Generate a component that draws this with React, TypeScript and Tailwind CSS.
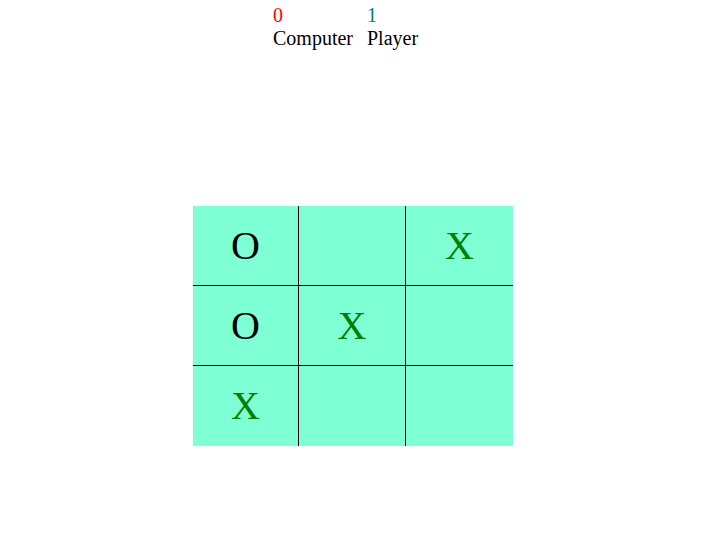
const board = ['O', '', 'X', 'O', 'X', '', 'X', '', ''];

export default function App() {
  return (
    <div className="min-h-screen bg-white" style={{ fontFamily: '"Liberation Serif", "Times New Roman", serif' }}>
      {/* Scoreboard */}
      <div className="flex pl-[273px] pt-1 text-[20px] leading-[23px] text-black">
        <div className="flex flex-col w-[94px]">
          <span className="text-[#ff0000]">0</span>
          <span>Computer</span>
        </div>
        <div className="flex flex-col">
          <span className="text-[#008080]">1</span>
          <span>Player</span>
        </div>
      </div>

      {/* Board */}
      <div className="ml-[193px] mt-[156px] grid grid-cols-[106px_107px_107px] grid-rows-3 w-[320px] h-[240px] bg-[#7fffd4]">
        {board.map((cell, i) => {
          const col = i % 3;
          const row = Math.floor(i / 3);
          return (
            <div
              key={i}
              className={`flex items-center justify-center text-[40px] leading-[46px] border-black ${
                col < 2 ? 'border-r' : ''
              } ${row < 2 ? 'border-b' : ''} ${cell === 'X' ? 'text-[#008000]' : 'text-black'}`}
            >
              {cell}
            </div>
          );
        })}
      </div>
    </div>
  );
}
